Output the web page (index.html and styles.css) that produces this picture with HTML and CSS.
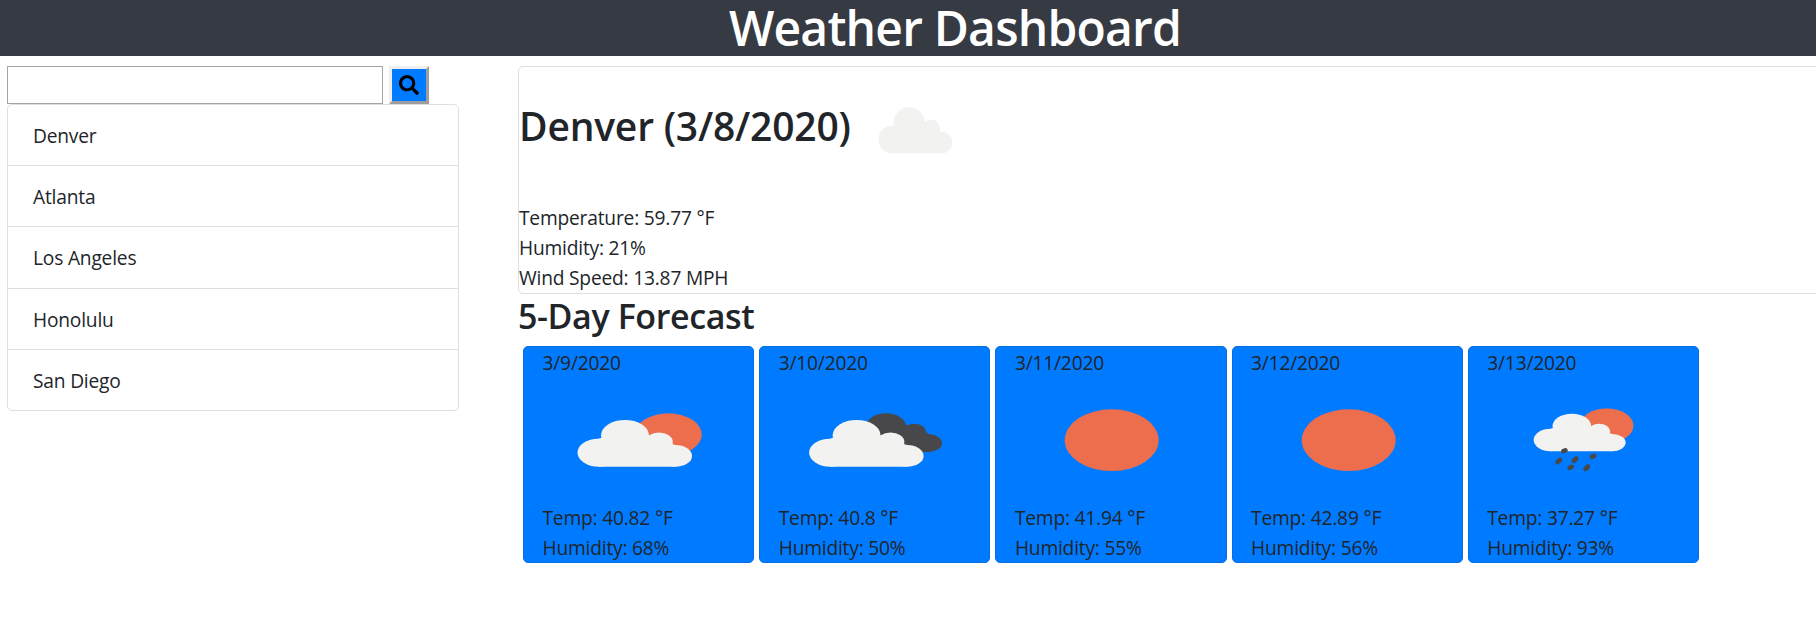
FILE: index.html
```
<!DOCTYPE html>
<html lang="en">
<head>
<meta charset="utf-8">
<title>Weather Dashboard</title>
<link rel="stylesheet" href="styles.css">
</head>
<body>
<svg class="defs" width="0" height="0">
  <defs>
    <g id="cloud">
      <ellipse cx="54.5" cy="75.7" rx="21" ry="14"/>
      <ellipse cx="81" cy="58.5" rx="24" ry="15.6"/>
      <ellipse cx="115" cy="65" rx="13.8" ry="9.6"/>
      <ellipse cx="131.5" cy="78.9" rx="16.5" ry="10.8"/>
      <path d="M54.5 61.7L60 60H104L118 64L131.5 68.1V89.7H54.5Z"/>
    </g>
  </defs>
</svg>
<header class="banner"><h1 class="title">Weather Dashboard</h1></header>
<main class="layout">
  <aside class="sidebar">
    <div class="search">
      <input class="search-input" type="text" aria-label="City">
      <button class="search-button" aria-label="Search"><svg class="search-icon" viewBox="0 0 512 512"><path d="M505 442.700L405.300 343c-4.500-4.500-10.600-7-17-7H372c27.600-35.300 44-79.700 44-128C416 93.100 322.900 0 208 0S0 93.100 0 208s93.100 208 208 208c48.300 0 92.700-16.400 128-44v16.300c0 6.400 2.500 12.500 7 17l99.700 99.700c9.400 9.400 24.600 9.400 33.900 0l28.300-28.300c9.400-9.400 9.400-24.600.1-34zM208 336c-70.700 0-128-57.200-128-128 0-70.700 57.200-128 128-128 70.700 0 128 57.200 128 128 0 70.700-57.200 128-128 128z"/></svg></button>
    </div>
    <ul class="cities">
      <li class="city">Denver</li>
      <li class="city">Atlanta</li>
      <li class="city">Los Angeles</li>
      <li class="city">Honolulu</li>
      <li class="city">San Diego</li>
    </ul>
  </aside>
  <section class="content">
    <div class="current">
      <div class="current-head">
        <h2 class="current-title"><span>Denver (3/8/2020)</span></h2>
        <svg class="current-icon" viewBox="0 0 125 125"><use href="#cloud" class="white" transform="translate(3.800 -2) scale(.646 .985)"/></svg>
      </div>
      <p class="line">Temperature: 59.77 °F</p>
      <p class="line">Humidity: 21%</p>
      <p class="line">Wind Speed: 13.87 MPH</p>
    </div>
    <h3 class="forecast-title"><span>5-Day Forecast</span></h3>
    <div class="forecast">
      <article class="day">
        <p class="line">3/9/2020</p>
        <svg class="icon" viewBox="0 0 189 125"><ellipse class="sun" cx="124.300" cy="57.500" rx="33.500" ry="21.200"/><use href="#cloud" class="white"/></svg>
        <p class="line">Temp: 40.82 °F</p>
        <p class="line">Humidity: 68%</p>
      </article>
      <article class="day">
        <p class="line">3/10/2020</p>
        <svg class="icon" viewBox="0 0 189 125"><g class="dark"><ellipse cx="106" cy="49.500" rx="20" ry="13.200"/><ellipse cx="134.300" cy="54.700" rx="11.500" ry="8"/><ellipse cx="148.500" cy="66" rx="13.500" ry="9"/><path d="M106 48H137L148.500 57V75H106Z"/></g><use href="#cloud" class="white" transform="translate(-4.400 0)"/></svg>
        <p class="line">Temp: 40.8 °F</p>
        <p class="line">Humidity: 50%</p>
      </article>
      <article class="day">
        <p class="line">3/11/2020</p>
        <svg class="icon" viewBox="0 0 189 125"><ellipse class="sun" cx="95.700" cy="63.200" rx="47" ry="30.900"/></svg>
        <p class="line">Temp: 41.94 °F</p>
        <p class="line">Humidity: 55%</p>
      </article>
      <article class="day">
        <p class="line">3/12/2020</p>
        <svg class="icon" viewBox="0 0 189 125"><ellipse class="sun" cx="95.700" cy="63.200" rx="47" ry="30.900"/></svg>
        <p class="line">Temp: 42.89 °F</p>
        <p class="line">Humidity: 56%</p>
      </article>
      <article class="day">
        <p class="line">3/13/2020</p>
        <svg class="icon" viewBox="0 0 189 125"><ellipse class="sun" cx="117.700" cy="48.700" rx="26.800" ry="17.300"/><use href="#cloud" class="white" transform="translate(17.800 2.100) scale(.803 .805)"/><g class="rain"><path d="M74.300 74.200L76.500 73.300"/><path d="M68.500 85.200L71 82.800"/><path d="M84.800 83.900L87.300 81.500"/><path d="M102.800 79.900L105.200 78.900"/><path d="M80.600 90.800L82.800 89.900"/><path d="M96.500 91.900L99 89.500"/></g></svg>
        <p class="line">Temp: 37.27 °F</p>
        <p class="line">Humidity: 93%</p>
      </article>
    </div>
  </section>
</main>
</body>
</html>
```
FILE: styles.css
```
* { box-sizing: border-box; }
body {
  margin: 0;
  background: #fff;
  color: #212529;
  font: 400 19.2px/30px "Open Sans", "Noto Sans", sans-serif;
  letter-spacing: -0.2px;
  overflow: hidden;
}
h1, h2, h3, p, ul { margin: 0; padding: 0; }
.defs { position: absolute; }
.banner { height: 56px; background: #363a42; }
.title {
  padding-left: 94px;
  color: #fff;
  font-size: 48px;
  font-weight: 600;
  line-height: 56px;
  letter-spacing: -0.8px;
  text-align: center;
}
.layout { display: flex; align-items: flex-start; padding: 10px 0 0 7px; }
.sidebar { width: 452px; flex: none; margin-right: 59px; }
.search { display: flex; gap: 6px; height: 38px; }
.search-input { width: 376px; padding: 1px 2px; border: 1px solid #a5a5a5; }
.search-button {
  display: flex;
  align-items: center;
  justify-content: center;
  width: 40px;
  padding: 0;
  background: #007bff;
  border: 3px solid;
  border-color: #efefef #9d9d9d #9d9d9d #efefef;
}
.search-icon { width: 20px; height: 20px; }
.cities { list-style: none; border: 1px solid #dfdfdf; border-radius: 5px; }
.city { height: 61.2px; padding: 16px 25px; border-bottom: 1px solid #dfdfdf; }
.city:last-child { height: 60.2px; border-bottom: 0; }
.content { width: 1350px; flex: none; }
.current { height: 228px; border: 1px solid #dfdfdf; border-radius: 5px; }
.current-head { display: flex; height: 135.500px; }
.current-title {
  width: 334px;
  font-size: 39px;
  font-weight: 600;
  line-height: 118px;
  letter-spacing: -0.2px;
  white-space: nowrap;
}
.current-icon { width: 125px; height: 125px; }
.forecast-title {
  height: 52px;
  font-size: 34px;
  font-weight: 600;
  line-height: 45px;
  letter-spacing: -0.4px;
}
.forecast { display: flex; gap: 5px; padding-left: 5px; }
.day {
  width: 231.200px;
  height: 217px;
  padding: 1px 0 0 18.500px;
  background: #007bff;
  border: 1px solid #0670e2;
  border-radius: 5px;
}
.icon { display: block; width: 189px; height: 125px; margin: -1px 0 1px 1.5px; }
.white { fill: #f2f2f1; }
.sun { fill: #ec6e4c; }
.dark { fill: #48484a; }
.rain { fill: none; stroke: #48484a; stroke-width: 4.6px; stroke-linecap: round; }
```
